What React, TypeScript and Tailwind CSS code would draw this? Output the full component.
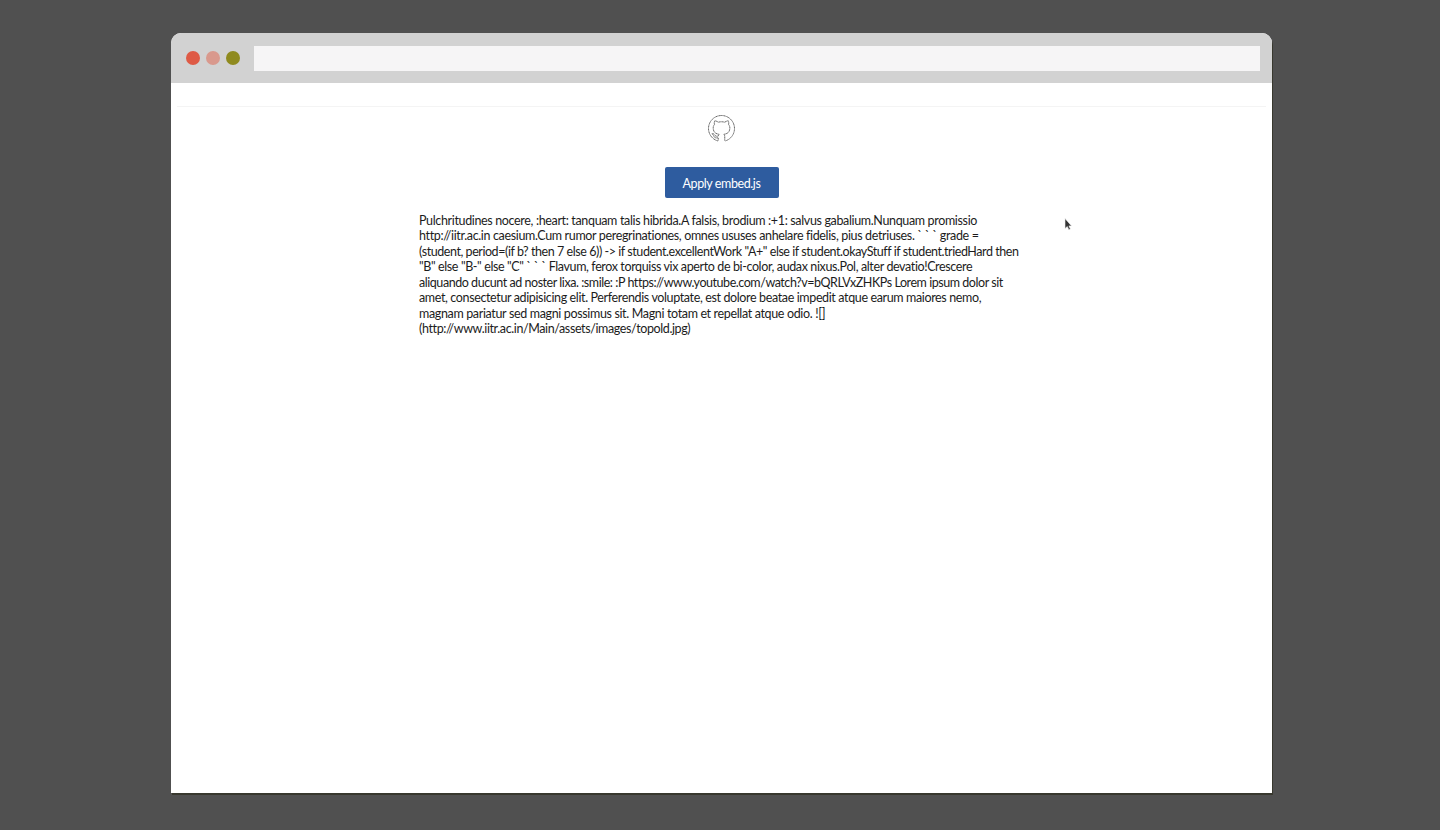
const lines = [
  { t: 'Pulchritudines nocere, :heart: tanquam talis hibrida.A falsis, brodium :+1: salvus gabalium.Nunquam promissio', c: 'tracking-[-0.35px]' },
  { t: 'http://iitr.ac.in caesium.Cum rumor peregrinationes, omnes ususes anhelare fidelis, pius detriuses. ` ` ` grade =', c: 'tracking-[-0.35px]' },
  { t: '(student, period=(if b? then 7 else 6)) -> if student.excellentWork "A+" else if student.okayStuff if student.triedHard then', c: 'tracking-[-0.44px]' },
  { t: '"B" else "B-" else "C" ` ` ` Flavum, ferox torquiss vix aperto de bi-color, audax nixus.Pol, alter devatio!Crescere', c: 'tracking-[-0.38px]' },
  { t: 'aliquando ducunt ad noster lixa. :smile: :P https://www.youtube.com/watch?v=bQRLVxZHKPs Lorem ipsum dolor sit', c: 'tracking-[-0.45px]' },
  { t: 'amet, consectetur adipisicing elit. Perferendis voluptate, est dolore beatae impedit atque earum maiores nemo,', c: 'tracking-[-0.37px]' },
  { t: 'magnam pariatur sed magni possimus sit. Magni totam et repellat atque odio. ![]', c: 'tracking-[-0.35px]' },
  { t: '(http://www.iitr.ac.in/Main/assets/images/topold.jpg)', c: 'tracking-[-0.39px]' },
];

export default function App() {
  return (
    <div className="relative h-[830px] w-[1440px] overflow-hidden bg-[#505050] pt-[33px] pl-[171px] font-['Lato',sans-serif]">
      <div className="flex h-[760px] w-[1101px] flex-col overflow-hidden rounded-t-[10px] bg-white shadow-[1px_2px_0_#38382e]">
        <div className="flex h-[50px] shrink-0 items-center bg-[#d2d2d2] pr-[12px] pl-[15px]">
          <div className="flex gap-[6px]">
            <span className="h-[14px] w-[14px] rounded-full bg-[#de5a45]" />
            <span className="h-[14px] w-[14px] rounded-full bg-[#d9998d]" />
            <span className="h-[14px] w-[14px] rounded-full bg-[#8f8a1e]" />
          </div>
          <div className="ml-[14px] h-[25px] flex-1 bg-[#f6f5f6]" />
        </div>
        <div className="mx-[6px] h-[24px] shrink-0 border-b border-[#f4f4f4]" />
        <div className="flex flex-col items-center">
          <svg viewBox="0 0 16 16" className="mt-[8px] h-[27px] w-[27px]" fill="none" stroke="#3a3a3a" strokeWidth="0.45" strokeDasharray="0.7 0.18">
            <path d="M8 .3C3.75.3.3 3.75.3 8c0 3.4 2.2 6.28 5.27 7.3.38.07.52-.17.52-.37 0-.18-.01-.79-.01-1.44-1.94.36-2.44-.47-2.59-.9-.09-.22-.46-.9-.79-1.09-.27-.14-.65-.5-.01-.51.61-.01 1.04.56 1.18.79.69 1.16 1.8.84 2.24.64.07-.5.27-.84.49-1.03-1.71-.19-3.5-.86-3.5-3.8 0-.84.3-1.53.79-2.07-.08-.19-.35-.98.08-2.04 0 0 .64-.2 2.12.79.62-.17 1.27-.26 1.92-.26s1.31.09 1.92.26c1.47-1 2.12-.79 2.12-.79.42 1.06.16 1.85.08 2.04.49.54.79 1.22.79 2.07 0 2.95-1.8 3.61-3.51 3.8.28.24.52.7.52 1.42 0 1.03-.01 1.86-.01 2.12 0 .2.14.44.53.37A7.7 7.7 0 0 0 15.7 8C15.7 3.75 12.25.3 8 .3z" />
          </svg>
          <button className="mt-[25px] h-[31px] w-[114px] rounded-[2px] bg-[#2e5c9f] pt-[2px] text-[12.5px] leading-[29px] tracking-[-0.4px] text-white">
            Apply embed.js
          </button>
          <div className="mt-[15px] w-[605px] text-[12.5px] leading-[15.43px] whitespace-nowrap text-[#1c1c1c]">
            {lines.map((line) => (
              <p key={line.t} className={line.c}>{line.t}</p>
            ))}
          </div>
        </div>
      </div>
      <svg viewBox="0 0 8 13" className="absolute top-[218px] left-[1064px] h-[13px] w-[8px]">
        <path d="M1 .5v10l2.3-2 1.5 3.2 1.6-.8-1.5-3h2.6z" fill="#333" stroke="#eee" strokeWidth="0.6" />
      </svg>
    </div>
  );
}
